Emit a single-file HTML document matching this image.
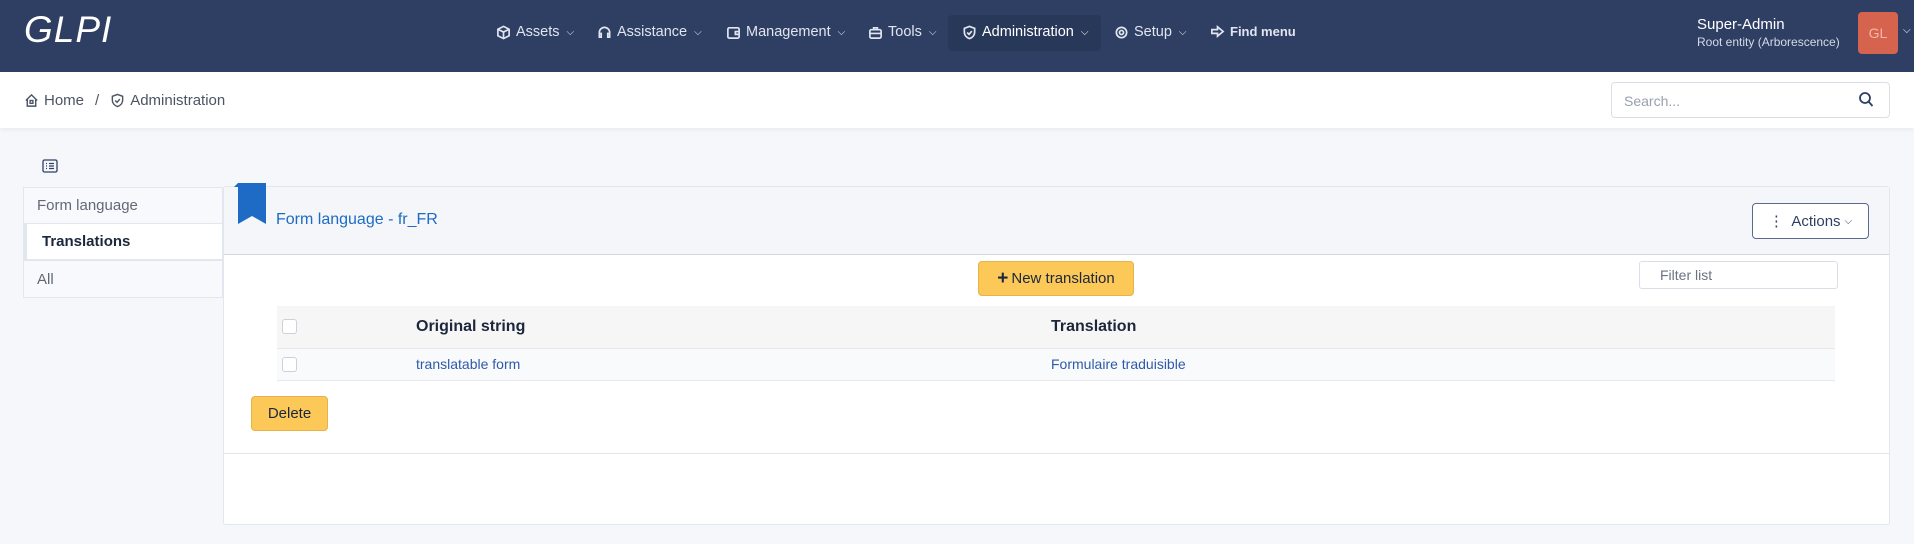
<!DOCTYPE html>
<html><head><meta charset="utf-8"><style>
*{box-sizing:border-box;margin:0;padding:0}
body{width:1914px;height:544px;overflow:hidden;background:#f5f7fb;font-family:"Liberation Sans",sans-serif;position:relative;color:#1d273b}
.abs{position:absolute}
.hdr{left:0;top:0;width:1914px;height:72px;background:#2f3f64}
.nav{top:24px;color:#e0e5ef;font-size:14.5px;display:flex;align-items:center;gap:5px;white-space:nowrap}
.nav svg{width:15px;height:15px;stroke:#e0e5ef;fill:none;stroke-width:1.8}
.chev{font-size:10px;margin-left:2px}
.bc{left:0;top:72px;width:1914px;height:56px;background:#fff;box-shadow:0 2px 4px rgba(0,0,0,.05)}
.tab{left:23px;width:200px;border:1px solid #e2e6ee;font-size:15px;padding-left:13px;display:flex;align-items:center;background:#f8f9fc;color:#626976}
.btn{border-radius:4px;display:flex;align-items:center;justify-content:center;font-size:15px}
</style></head><body>
<div class="abs hdr"></div>
<div class="abs" style="left:24px;top:10px;color:#fff;font-size:37px;font-style:italic;line-height:40px;letter-spacing:1px;font-family:'Liberation Sans',sans-serif">GLPI</div>
<div class="abs" style="left:948px;top:15px;width:153px;height:36px;background:#283859;border-radius:4px"></div>
<div class="abs nav" style="left:496px"><svg viewBox="0 0 16 16"><path d="M8 1.5l6 3v7l-6 3-6-3v-7z M2 4.5l6 3 6-3 M8 7.5v7"/></svg>Assets<span class="chev">⌵</span></div>
<div class="abs nav" style="left:597px"><svg viewBox="0 0 16 16"><path d="M2.5 11v-3a5.5 5.5 0 0 1 11 0v3 M2.5 9h2v4h-2z M11.5 9h2v4h-2z"/></svg>Assistance<span class="chev">⌵</span></div>
<div class="abs nav" style="left:726px"><svg viewBox="0 0 16 16"><rect x="2" y="3" width="12" height="11" rx="1.5"/><path d="M14 7h-4v3h4"/></svg>Management<span class="chev">⌵</span></div>
<div class="abs nav" style="left:868px"><svg viewBox="0 0 16 16"><rect x="2" y="5" width="12" height="9" rx="1.5"/><path d="M6 5V3h4v2 M2 9h12"/></svg>Tools<span class="chev">⌵</span></div>
<div class="abs nav" style="left:962px;color:#fff"><svg viewBox="0 0 16 16"><path d="M8 1.5l5.5 2v4c0 3.5-2.5 6-5.5 7-3-1-5.5-3.5-5.5-7v-4z M5.5 8l2 2 3-3.5"/></svg>Administration<span class="chev">⌵</span></div>
<div class="abs nav" style="left:1114px"><svg viewBox="0 0 16 16"><circle cx="8" cy="8" r="2.2"/><circle cx="8" cy="8" r="5.5"/></svg>Setup<span class="chev">⌵</span></div>
<div class="abs nav" style="left:1210px;font-size:13px;font-weight:bold"><svg viewBox="0 0 16 16"><path d="M2 6h6V3l6 5-6 5v-3H2z"/></svg>Find menu</div>
<div class="abs" style="left:1697px;top:16px;color:#fff;font-size:15px">Super-Admin</div>
<div class="abs" style="left:1697px;top:35px;color:#d4dae6;font-size:12px">Root entity (Arborescence)</div>
<div class="abs btn" style="left:1858px;top:12px;width:40px;height:42px;background:#d6634e;color:#f3b7aa;font-size:14px">GL</div>
<div class="abs" style="left:1903px;top:25px;color:#fff;font-size:10px">⌵</div>

<div class="abs bc"></div>
<div class="abs" style="left:24px;top:92px;font-size:15px;color:#4b5563;display:flex;align-items:center;gap:5px"><svg width="15" height="15" viewBox="0 0 16 16" fill="none" stroke="#4b5563" stroke-width="1.5"><path d="M2 8l6-6 6 6 M3.5 6.5V14h9V6.5"/><rect x="6.5" y="8" width="3" height="3"/></svg>Home <span style="margin:0 6px">/</span><svg width="15" height="15" viewBox="0 0 16 16" fill="none" stroke="#4b5563" stroke-width="1.5"><path d="M8 1.5l5.5 2v4c0 3.5-2.5 6-5.5 7-3-1-5.5-3.5-5.5-7v-4z M5.5 8l2 2 3-3.5"/></svg>Administration</div>
<div class="abs" style="left:1611px;top:82px;width:279px;height:36px;border:1px solid #dadfe7;border-radius:4px;background:#fff;font-size:14px;color:#9aa0ac;padding:10px 12px">Search...</div>
<svg class="abs" style="left:1858px;top:91px" width="16" height="17" viewBox="0 0 16 17" fill="none" stroke="#2f3f64" stroke-width="1.8"><circle cx="7" cy="7" r="5"/><path d="M10.5 10.5l4 4.5"/></svg>

<svg class="abs" style="left:42px;top:159px" width="16" height="14" viewBox="0 0 16 14" fill="none" stroke="#2f3f64" stroke-width="1.3"><rect x="1" y="1" width="14" height="12" rx="1.5"/><path d="M4 4.5h1M7 4.5h5M4 7h1M7 7h5M4 9.5h1M7 9.5h5"/></svg>
<div class="abs tab" style="top:187px;height:37px">Form language</div>
<div class="abs tab" style="top:223px;height:37px;background:#fff;color:#1d273b;font-weight:bold;border-left:4px solid #e2e6ee;padding-left:15px">Translations</div>
<div class="abs tab" style="top:260px;height:38px">All</div>

<div class="abs" style="left:223px;top:186px;width:1667px;height:339px;background:#fff;border:1px solid #e2e6ee;border-radius:3px"></div>
<div class="abs" style="left:224px;top:187px;width:1665px;height:68px;background:#f4f6fa;border-bottom:1px solid #d0d7e3"></div>
<svg class="abs" style="left:234px;top:183px" width="33" height="41" viewBox="0 0 33 41"><path d="M4 0h28v41l-14-8-14 8V4z M0 4l4-4v4z" fill="#1d6bc4"/></svg>
<div class="abs" style="left:276px;top:211px;font-size:16px;color:#1d6bc4">Form language - fr_FR</div>
<div class="abs btn" style="left:1752px;top:203px;width:117px;height:36px;border:1px solid #5a6a8e;color:#2f3f64;background:#fff">⋮&nbsp; Actions <span style="font-size:10px;margin-left:4px">⌵</span></div>
<div class="abs btn" style="left:978px;top:261px;width:156px;height:35px;background:#fcc858;border:1px solid #e6b24a;color:#1d273b"><b style="font-size:19px;margin-right:3px">+</b>New translation</div>
<div class="abs" style="left:1639px;top:261px;width:199px;height:28px;border:1px solid #dadfe7;border-radius:3px;font-size:14px;color:#6b7280;padding:5px 20px">Filter list</div>
<div class="abs" style="left:277px;top:306px;width:1558px;height:43px;background:#f6f6f6;border-bottom:1px solid #e6e8ec"></div>
<div class="abs" style="left:277px;top:349px;width:1558px;height:32px;background:#f9fafb;border-bottom:1px solid #e6e8ec"></div>
<div class="abs" style="left:282px;top:319px;width:15px;height:15px;border:1px solid #ccd1d9;border-radius:3px;background:#fff"></div>
<div class="abs" style="left:282px;top:357px;width:15px;height:15px;border:1px solid #ccd1d9;border-radius:3px;background:#fff"></div>
<div class="abs" style="left:416px;top:318px;font-size:16px;font-weight:bold">Original string</div>
<div class="abs" style="left:1051px;top:318px;font-size:16px;font-weight:bold">Translation</div>
<div class="abs" style="left:416px;top:356px;font-size:14px;color:#2f5aa8">translatable form</div>
<div class="abs" style="left:1051px;top:356px;font-size:14px;color:#2f5aa8">Formulaire traduisible</div>
<div class="abs btn" style="left:251px;top:396px;width:77px;height:35px;background:#fcc858;border:1px solid #e6b24a;color:#1d273b">Delete</div>
<div class="abs" style="left:224px;top:453px;width:1665px;height:1px;background:#e2e6ee"></div>
</body></html>
